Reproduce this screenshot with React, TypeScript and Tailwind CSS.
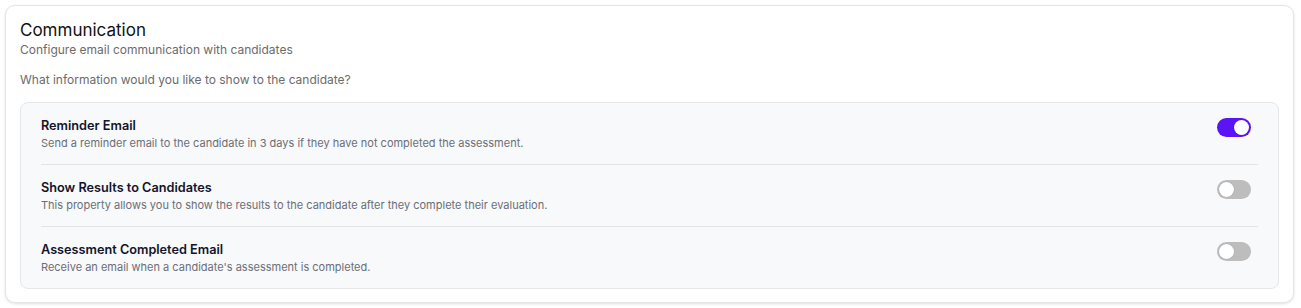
import React from "react";

const rows = [
  { title: "Reminder Email", desc: "Send a reminder email to the candidate in 3 days if they have not completed the assessment.", on: true },
  { title: "Show Results to Candidates", desc: "This property allows you to show the results to the candidate after they complete their evaluation.", on: false },
  { title: "Assessment Completed Email", desc: "Receive an email when a candidate's assessment is completed.", on: false },
];

function Toggle({ on }: { on: boolean }) {
  return (
    <div
      className={
        on
          ? "w-[34px] h-[19px] rounded-full bg-[#5a14f5] flex items-center justify-end px-[2px]"
          : "w-[34px] h-[19px] rounded-full bg-[#bdbdbd] flex items-center justify-start px-[2px]"
      }
    >
      <div className="w-[15px] h-[15px] rounded-full bg-white shadow-[0_0_1px_rgba(0,0,0,0.3)]" />
    </div>
  );
}

export default function App() {
  return (
    <div className="bg-white w-[1301px] h-[308px] pt-[5px] pl-[5px] pr-[7px]" style={{ fontFamily: "Inter, 'Noto Sans', sans-serif" }}>
      <div className="rounded-[10px] border border-[#e5e5e5] shadow-[0_1px_3px_rgba(0,0,0,0.12)] bg-white px-[14px] pt-[12px] pb-[13px]">
        <h2 className="text-[17px] leading-[24px] text-[#111] font-normal">Communication</h2>
        <p className="text-[12px] leading-[16px] text-[#6b6b6b]">Configure email communication with candidates</p>
        <p className="text-[12px] leading-[16px] text-[#6b6b6b] mt-[14px]">What information would you like to show to the candidate?</p>
        <div className="mt-[14px] rounded-[8px] border border-[#e6e7ea] bg-[#f8f9fb] px-[20px]">
          {rows.map((r, i) => (
            <div
              key={r.title}
              className={
                i < rows.length - 1
                  ? "flex items-start justify-between border-b border-[#e3e4e7] pt-[14px] pb-[13px]"
                  : "flex items-start justify-between pt-[14px] pb-[13px]"
              }
            >
              <div>
                <div className="text-[12.7px] leading-[18px] font-semibold text-[#14142b]">{r.title}</div>
                <div className="text-[11px] leading-[16px] text-[#6b6e76]">{r.desc}</div>
              </div>
              <div className="pt-[1px] pr-[7px]">
                <Toggle on={r.on} />
              </div>
            </div>
          ))}
        </div>
      </div>
    </div>
  );
}
